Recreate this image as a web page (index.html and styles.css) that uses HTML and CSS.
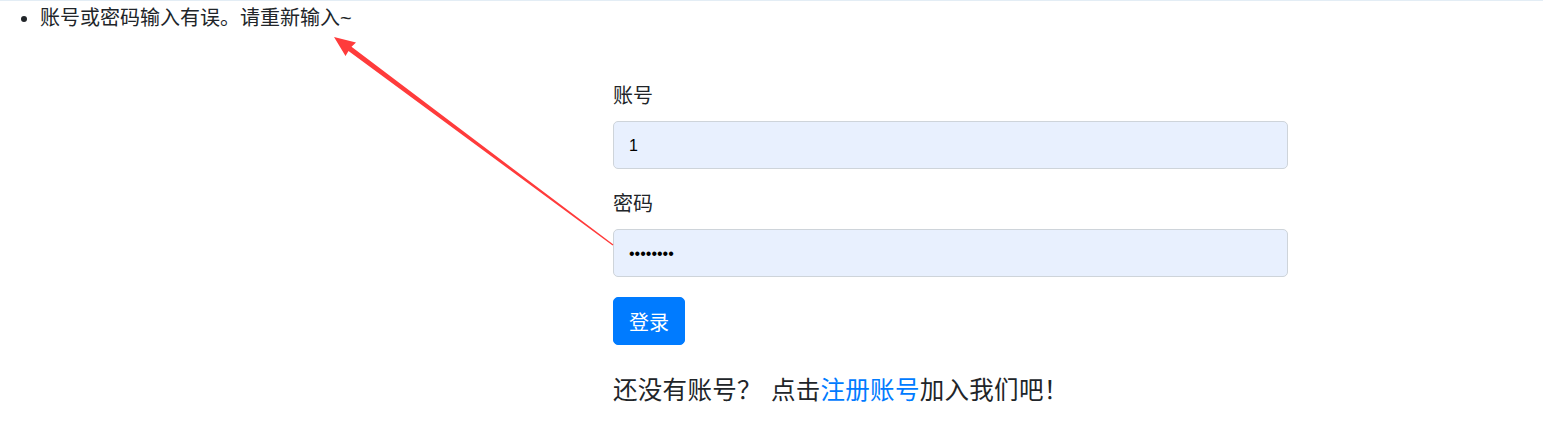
FILE: index.html
```html
<!DOCTYPE html>
<html lang="zh">
<head>
<meta charset="utf-8">
<title>登录</title>
<link rel="stylesheet" href="styles.css">
</head>
<body>
<div class="topline"></div>
<ul class="errors">
  <li>账号或密码输入有误。请重新输入~</li>
</ul>
<div class="login">
  <form class="form">
    <div class="group">
      <label class="label" for="acc">账号</label>
      <input class="field" id="acc" type="text" value="1">
    </div>
    <div class="group">
      <label class="label" for="pwd">密码</label>
      <input class="field" id="pwd" type="password" value="12345678">
    </div>
    <button class="btn" type="button">登录</button>
  </form>
  <p class="hint">还没有账号？ 点击<a class="link" href="#">注册账号</a>加入我们吧！</p>
</div>
<svg class="arrow" width="1543" height="448" viewBox="0 0 1543 448" aria-hidden="true">
  <polygon fill="#ff3b3b" points="334,37 356,42.5 351.5,46.8 613.4,244.6 612.6,245.4 348.5,51 345.5,56"/>
</svg>
</body>
</html>
```
FILE: styles.css
```css
html, body {
  margin: 0;
  padding: 0;
  background: #fff;
}
body {
  font-family: "Liberation Sans", "Noto Sans CJK SC", sans-serif;
  font-size: 20px;
  line-height: 1.5;
  color: #212529;
  position: relative;
  height: 448px;
  overflow: hidden;
}
.topline {
  height: 1px;
  background: #e3edf5;
}
.errors {
  margin: 2px 0 0;
  padding-left: 40px;
}
.login {
  width: 675px;
  margin: 48px 0 0 613px;
}
.form {
  display: flex;
  flex-direction: column;
  align-items: flex-start;
}
.group {
  width: 100%;
  margin-bottom: 20px;
}
.label {
  display: block;
  margin-bottom: 10px;
}
.field {
  display: block;
  box-sizing: border-box;
  width: 100%;
  height: 48px;
  padding: 2px 15px 0;
  font-family: "Liberation Sans", "Noto Sans CJK SC", sans-serif;
  font-size: 16px;
  color: #000;
  background: #e8f0fe;
  border: 1px solid #ced4da;
  border-radius: 5px;
  outline: none;
}
.btn {
  height: 48px;
  padding: 0 15px;
  font-family: "Liberation Sans", "Noto Sans CJK SC", sans-serif;
  font-size: 20px;
  color: #fff;
  background: #007bff;
  border: 1px solid #007bff;
  border-radius: 5px;
}
.hint {
  margin: 31px 0 0;
  font-size: 24.5px;
  line-height: 1.2;
  word-spacing: 2px;
  letter-spacing: 0.3px;
}
.link {
  color: #007bff;
  text-decoration: none;
}
.arrow {
  position: absolute;
  left: 0;
  top: 0;
  pointer-events: none;
}
```
